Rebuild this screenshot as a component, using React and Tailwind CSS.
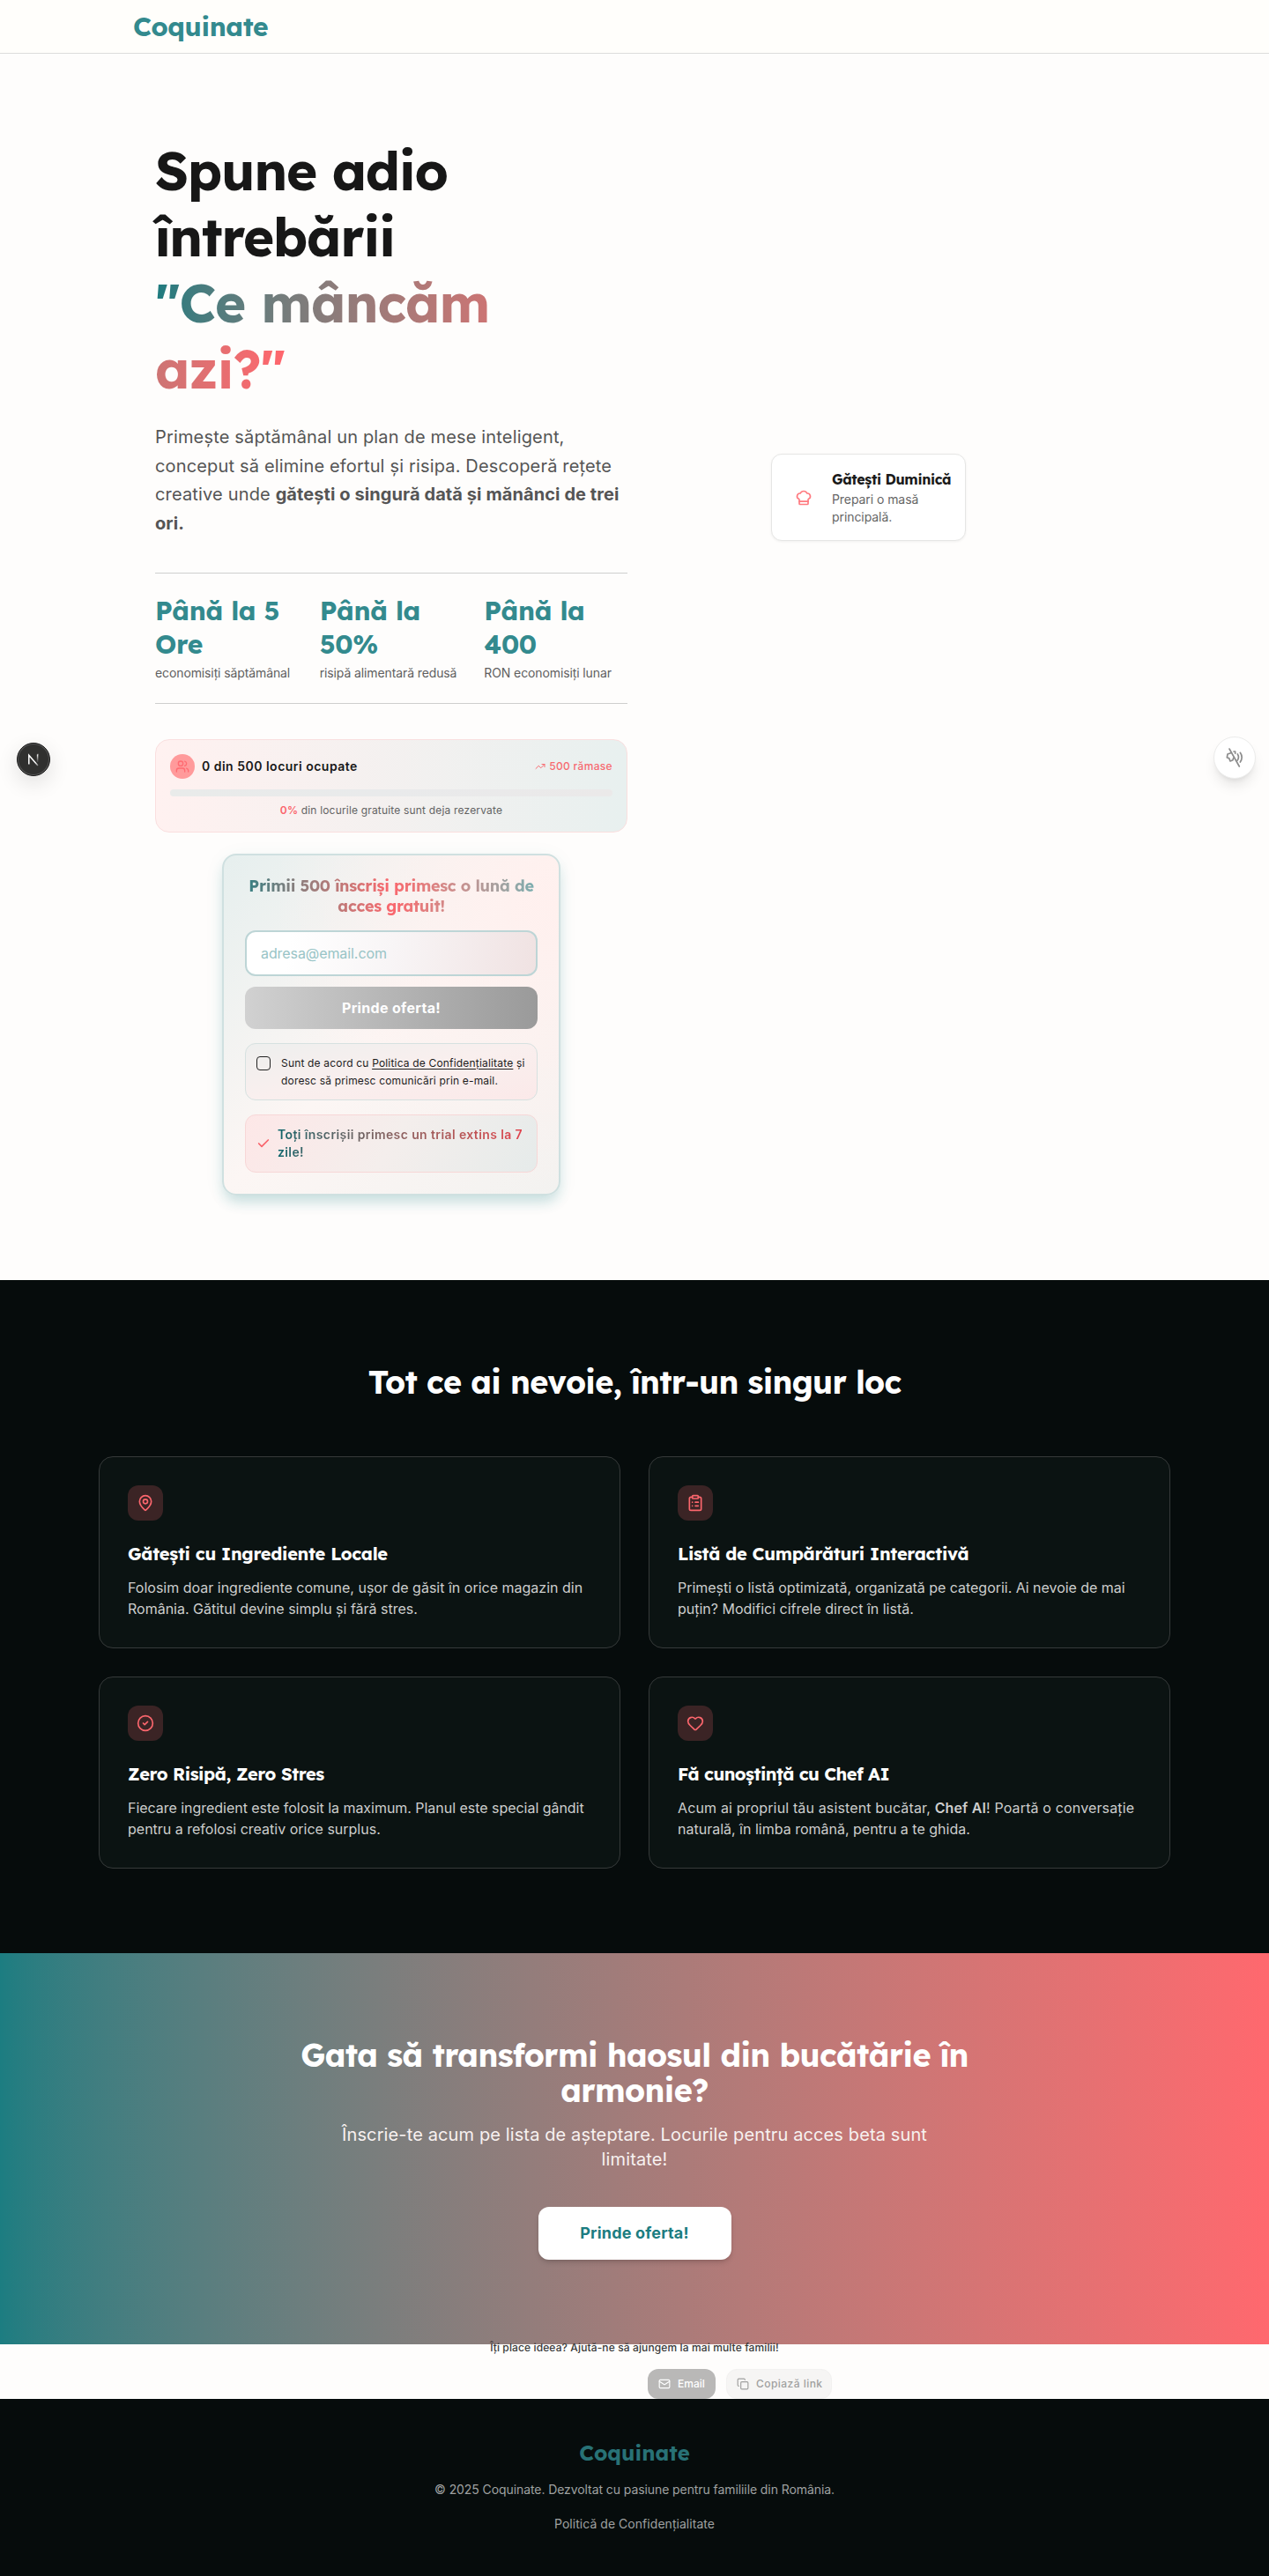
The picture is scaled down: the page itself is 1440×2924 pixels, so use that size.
import React from "react";
import {
  Users,
  TrendingUp,
  Check,
  ChefHat,
  MapPin,
  ClipboardList,
  CircleCheck,
  Heart,
  Mail,
  Copy,
} from "lucide-react";

const stats = [
  { value: ["Până la 5", "Ore"], label: "economisiți săptămânal" },
  { value: ["Până la", "50%"], label: "risipă alimentară redusă" },
  { value: ["Până la", "400"], label: "RON economisiți lunar" },
];

const features = [
  {
    Icon: MapPin,
    title: "Gătești cu Ingrediente Locale",
    titleClass: "tracking-[-0.014em]",
    text: (
      <>
        Folosim doar ingrediente comune, ușor de găsit în orice magazin din
        <br />
        România. Gătitul devine simplu și fără stres.
      </>
    ),
  },
  {
    Icon: ClipboardList,
    title: "Listă de Cumpărături Interactivă",
    titleClass: "tracking-[-0.014em]",
    text: (
      <>
        <span className="tracking-[-0.002em]">
          Primești o listă optimizată, organizată pe categorii. Ai nevoie de mai
        </span>
        <br />
        puțin? Modifici cifrele direct în listă.
      </>
    ),
  },
  {
    Icon: CircleCheck,
    title: "Zero Risipă, Zero Stres",
    titleClass: "tracking-[-0.021em]",
    text: (
      <>
        <span className="tracking-[-0.002em]">
          Fiecare ingredient este folosit la maximum. Planul este special gândit
        </span>
        <br />
        pentru a refolosi creativ orice surplus.
      </>
    ),
  },
  {
    Icon: Heart,
    title: "Fă cunoștință cu Chef AI",
    titleClass: "tracking-[-0.027em]",
    text: (
      <>
        <span className="tracking-[0.009em]">
          Acum ai propriul tău asistent bucătar, <strong className="font-semibold">Chef AI</strong>! Poartă o
          conversație
        </span>
        <br />
        naturală, în limba română, pentru a te ghida.
      </>
    ),
  },
];

function Header() {
  return (
    <header className="flex h-[61px] items-center border-b border-[#dcdcdb] bg-[#fffefb] pl-[151px]">
      <span className="font-['Lexend',Inter,sans-serif] text-3xl leading-9 font-bold tracking-[-0.013em] text-[#338a8e]">
        Coquinate
      </span>
    </header>
  );
}

function SpotsCard() {
  return (
    <div className="mt-10 rounded-2xl border border-[#fadfdf] bg-linear-to-r from-[#fff1f0] to-[#e8f0ef] p-4">
      <div className="flex items-center justify-between">
        <div className="flex items-center gap-2">
          <span className="flex size-7 items-center justify-center rounded-full bg-[#ff9a9b]">
            <Users size={16} strokeWidth={2} className="text-[#ff6b72]" />
          </span>
          <span className="text-sm font-semibold tracking-[0.035em] text-[#181818]">0 din 500 locuri ocupate</span>
        </div>
        <div className="flex items-center gap-1 text-[#f76a70]">
          <TrendingUp size={12} strokeWidth={2} />
          <span className="text-xs font-medium tracking-[0.028em]">500 rămase</span>
        </div>
      </div>
      <div className="mt-3 h-2 rounded-full bg-linear-to-r from-[#e9ebea] via-[#e9eaeb] to-[#ebe9e9]" />
      <p className="mt-2 text-center text-xs tracking-[0.015em] text-[#636363]">
        <strong className="font-semibold text-[#fb656d]">0%</strong> din locurile gratuite sunt deja rezervate
      </p>
    </div>
  );
}

function SignupCard() {
  return (
    <form className="mx-auto mt-6 w-96 rounded-2xl border-2 border-[#cfe0e0] bg-[radial-gradient(circle_at_100%_15%,#fff0ee_0%,#fff0ee00_65%),linear-gradient(135deg,#e6efee_0%,#fcf6f4_50%,#f3f2f0_100%)] p-6 shadow-[0_10px_15px_-3px_rgba(27,124,128,0.2),0_4px_24px_-4px_rgba(27,124,128,0.1)]">
      <h3 className="bg-linear-to-r from-[#2c7f83] via-[#fa666d] to-[#76aeb0] bg-clip-text text-center font-['Lexend',Inter,sans-serif] text-lg leading-[22.5px] font-bold tracking-[-0.017em] text-transparent">
        Primii 500 înscriși primesc o lună de
        <br />
        acces gratuit!
      </h3>
      <div className="mt-4 flex h-[52px] items-center rounded-xl border-2 border-[#bdd5d6] bg-linear-[100deg] from-white from-15% via-[#f8f5f6] via-50% to-[#f0e2e2] px-4">
        <input
          type="email"
          placeholder="adresa@email.com"
          className="w-full bg-transparent text-base tracking-[-0.005em] outline-none placeholder:text-[#98c4c6]"
        />
      </div>
      <button
        type="button"
        className="mt-3 h-12 w-full rounded-xl bg-linear-to-r from-[#d1d1d1] to-[#9a9a9a] text-base font-bold tracking-[0.02em] text-white"
      >
        Prinde oferta!
      </button>
      <label className="mt-4 flex items-start gap-3 rounded-xl border border-[#d6e1e0] bg-linear-to-br from-[#eeefee] via-[#f9efee] to-[#fbe9e9] p-3">
        <span className="mt-0.5 size-4 shrink-0 rounded-[4px] border border-[#202020]" />
        <span className="text-xs leading-[19.5px] tracking-[0.015em] whitespace-nowrap text-[#1c1c1c]">
          Sunt de acord cu <span className="underline underline-offset-2">Politica de Confidențialitate</span> și
          <br />
          doresc să primesc comunicări prin e-mail.
        </span>
      </label>
      <div className="mt-4 flex items-center gap-2 rounded-xl border border-[#f7d7d7] bg-linear-[120deg] from-[#fde7e7] via-[#f4eeec] to-[#e6ebea] p-3">
        <Check size={16} strokeWidth={2.6} className="shrink-0 text-[#f9646c]" />
        <span className="bg-linear-to-r from-[#02646a] to-[#e0424d] bg-clip-text text-sm font-semibold tracking-[0.028em] whitespace-nowrap text-transparent">
          Toți înscrișii primesc un trial extins la 7
          <br />
          zile!
        </span>
      </div>
    </form>
  );
}

function Hero() {
  return (
    <section className="flex px-44 pt-[95px] pb-24">
      <div className="w-[536px] shrink-0">
        <h1 className="font-['Lexend',Inter,sans-serif] text-6xl leading-[75px] font-bold tracking-[-0.022em] text-[#171717]">
          Spune adio
          <br />
          întrebării
          <br />
          <span className="bg-linear-to-r from-[#1a7b7f] to-[#ff666d] bg-clip-text tracking-[-0.018em] text-transparent">
            "Ce mâncăm
            <br />
            azi?"
          </span>
        </h1>
        <p className="mt-6 text-xl leading-[32.5px] tracking-[0.008em] text-[#555555]">
          Primește săptămânal un plan de mese inteligent,
          <br />
          conceput să elimine efortul și risipa. Descoperă rețete
          <br />
          creative unde{" "}
          <strong className="font-bold tracking-[0.004em]">
            gătești o singură dată și mănânci de trei
            <br />
            ori.
          </strong>
        </p>
        <div className="mt-10 grid grid-cols-3 gap-6 border-y border-[#cfcfce] py-6">
          {stats.map((s) => (
            <div key={s.label}>
              <p className="font-['Lexend',Inter,sans-serif] text-3xl leading-[37.5px] font-bold tracking-[-0.01em] text-[#338a8e]">
                {s.value[0]}
                <br />
                {s.value[1]}
              </p>
              <p className="mt-1 text-sm tracking-[-0.008em] whitespace-nowrap text-[#5f5f5f]">{s.label}</p>
            </div>
          ))}
        </div>
        <SpotsCard />
        <SignupCard />
      </div>
      <div className="relative flex-1">
        <div className="absolute top-[359px] left-[163px] flex h-[99px] w-[221px] items-center rounded-xl border border-[#e6e6e5] bg-white shadow-[0_1px_3px_rgba(0,0,0,0.06)]">
          <span className="flex w-[68px] shrink-0 items-center justify-center pl-1">
            <ChefHat size={20} strokeWidth={2} className="text-[#ff7a80]" />
          </span>
          <div className="pt-0.5">
            <p className="font-['Lexend',Inter,sans-serif] text-base leading-5 font-bold tracking-[-0.022em] whitespace-nowrap text-[#1a1a1a]">
              Gătești Duminică
            </p>
            <p className="mt-[3px] text-sm leading-5 tracking-[-0.005em] text-[#666666]">
              Prepari o masă
              <br />
              principală.
            </p>
          </div>
        </div>
      </div>
    </section>
  );
}

function Features() {
  return (
    <section className="bg-[#060c0c] px-28 py-24">
      <h2 className="text-center font-['Lexend',Inter,sans-serif] text-4xl leading-10 font-bold tracking-[-0.018em] text-white">
        Tot ce ai nevoie, într-un singur loc
      </h2>
      <div className="mt-16 grid grid-cols-2 gap-8">
        {features.map(({ Icon, title, titleClass, text }) => (
          <article key={title} className="rounded-2xl border border-[#363a3a] bg-[#0b1312] p-8">
            <div className="flex size-10 items-center justify-center rounded-xl bg-[#3b2425]">
              <Icon size={20} strokeWidth={2} className="text-[#fb666d]" />
            </div>
            <h3 className={`mt-6 font-['Lexend',Inter,sans-serif] text-xl leading-7 font-bold text-white ${titleClass}`}>
              {title}
            </h3>
            <p className="mt-3 text-base leading-6 whitespace-nowrap text-[#cdcecd]">{text}</p>
          </article>
        ))}
      </div>
    </section>
  );
}

function CallToAction() {
  return (
    <section className="flex flex-col items-center bg-linear-to-r from-[#1c7d81] to-[#ff686e] py-24 text-center">
      <h2 className="font-['Lexend',Inter,sans-serif] text-4xl leading-10 font-bold tracking-[-0.017em] text-white">
        Gata să transformi haosul din bucătărie în
        <br />
        armonie?
      </h2>
      <p className="mt-4 text-xl leading-7 tracking-[0.006em] text-[#f7f1f0]">
        Înscrie-te acum pe lista de așteptare. Locurile pentru acces beta sunt
        <br />
        limitate!
      </p>
      <button
        type="button"
        className="mt-10 h-15 w-[219px] rounded-xl bg-white text-lg font-bold tracking-[0.01em] text-[#1c7d81] shadow-[0_4px_6px_-1px_rgba(0,0,0,0.14),0_2px_4px_-2px_rgba(0,0,0,0.14)]"
      >
        Prinde oferta!
      </button>
    </section>
  );
}

function ShareStrip() {
  return (
    <section className="h-[62px] bg-[#fefdfc]">
      <div className="relative mx-auto flex w-[448px] -translate-y-1 flex-col">
        <p className="text-center text-xs font-medium tracking-[0.01em] whitespace-nowrap text-[#3a3a3a]">
          Îți place ideea? Ajută-ne să ajungem la mai multe familii!
        </p>
        <div className="mt-4 flex justify-end gap-3 text-xs font-medium whitespace-nowrap">
          <button
            type="button"
            className="flex h-[34px] w-[77px] items-center gap-2 rounded-xl bg-[#b9b8b7] pl-3 text-white"
          >
            <Mail size={14} strokeWidth={2} className="shrink-0" />
            Email
          </button>
          <button
            type="button"
            className="flex h-[34px] w-[120px] items-center gap-2 rounded-xl border border-[#f2f1f0] bg-[#f6f5f4] pl-[11px] tracking-[0.038em] text-[#a0a09f]"
          >
            <Copy size={14} strokeWidth={2} className="shrink-0" />
            Copiază link
          </button>
        </div>
      </div>
    </section>
  );
}

function Footer() {
  return (
    <footer className="flex h-[201px] flex-col items-center bg-[#060c0c] pt-[46px] text-sm text-[#9fa1a1]">
      <span className="font-['Lexend',Inter,sans-serif] text-2xl leading-[30px] font-bold text-[#287276]">Coquinate</span>
      <p className="mt-[17px] leading-5 tracking-[-0.006em]">
        © 2025 Coquinate. Dezvoltat cu pasiune pentru familiile din România.
      </p>
      <a href="#confidentialitate" className="mt-[19px] leading-5 tracking-[0.003em]">
        Politică de Confidențialitate
      </a>
    </footer>
  );
}

function DevBadge() {
  return (
    <div className="absolute top-[843px] left-[19px] flex size-[38px] items-center justify-center rounded-full border border-[#171717] bg-[#30302f] shadow-[0_8px_24px_rgba(0,0,0,0.12),inset_0_0_0_1px_#5a5a5a]">
      <svg width="14" height="15" viewBox="0 0 14 15" fill="none">
        <defs>
          <linearGradient id="stem" x1="0" y1="1" x2="0" y2="11" gradientUnits="userSpaceOnUse">
            <stop stopColor="#fff" />
            <stop offset="0.8" stopColor="#fff" stopOpacity="0.15" />
          </linearGradient>
          <linearGradient id="diag" x1="1" y1="1" x2="13" y2="14" gradientUnits="userSpaceOnUse">
            <stop offset="0.7" stopColor="#fff" />
            <stop offset="1" stopColor="#fff" stopOpacity="0.3" />
          </linearGradient>
        </defs>
        <path d="M1.8 12.5V2.2L12 14" stroke="url(#diag)" strokeWidth="1.5" />
        <path d="M11.6 1.5h.01V10" stroke="url(#stem)" strokeWidth="1.5" />
      </svg>
    </div>
  );
}

function SoundToggle() {
  return (
    <button
      type="button"
      aria-label="Sunet"
      className="absolute top-[836px] left-[1377px] flex size-12 items-center justify-center rounded-full border border-[#ececeb] bg-white shadow-[0_10px_15px_-3px_rgba(0,0,0,0.1),0_4px_6px_-4px_rgba(0,0,0,0.1)]"
    >
      <svg
        width="22"
        height="24"
        viewBox="91 87 66 72"
        fill="none"
        stroke="#8c8c8c"
        strokeWidth="5"
        strokeLinecap="round"
        strokeLinejoin="round"
      >
        <path d="M106 93l34 60" />
        <path d="M111 107l-11 4-2 12 7 2 4 10 9-4 2-7" />
        <path d="M121 102h5v7" />
        <path d="M134 111q7 11-1 22" />
        <path d="M143 106q11 16 0 32" />
      </svg>
    </button>
  );
}

export default function App() {
  return (
    <div className="relative w-full bg-[#fefdfc] font-['Inter',sans-serif]">
      <Header />
      <main>
        <Hero />
        <Features />
        <CallToAction />
        <ShareStrip />
      </main>
      <Footer />
      <DevBadge />
      <SoundToggle />
    </div>
  );
}
